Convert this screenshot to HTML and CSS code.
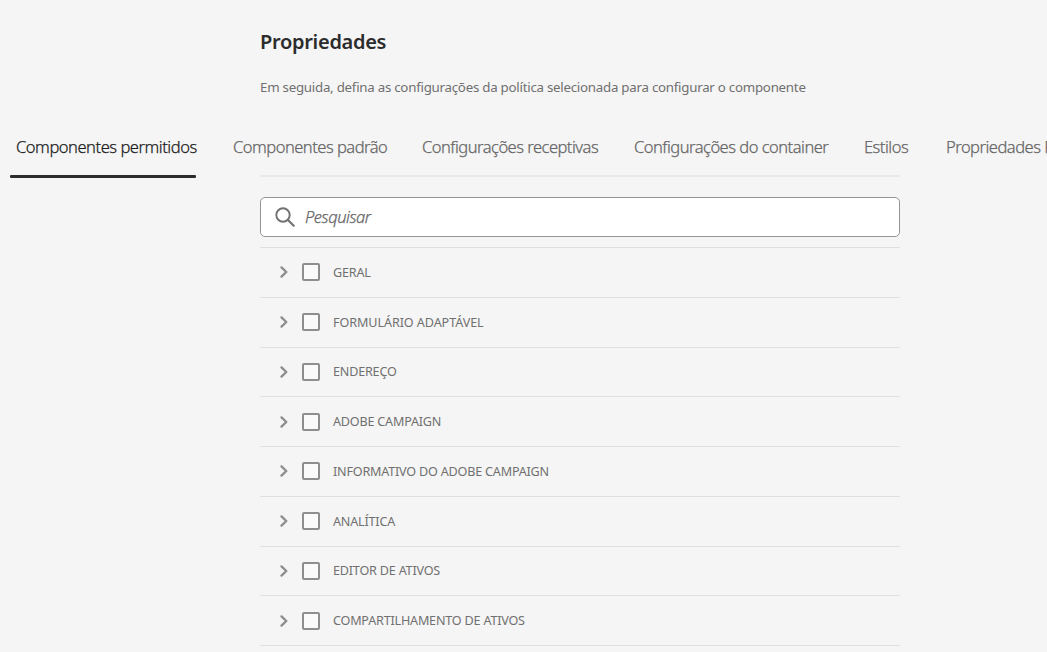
FILE: index.html
```
<!DOCTYPE html>
<html lang="pt-BR">
<head>
<meta charset="utf-8">
<title>Propriedades</title>
<link rel="stylesheet" href="styles.css">
</head>
<body>
<svg class="defs" aria-hidden="true"><symbol id="chevron" viewBox="0 0 10 14"><path d="M2.5 2.4 7.3 7 2.5 11.6" fill="none" stroke="currentColor" stroke-width="2.4" stroke-linecap="round" stroke-linejoin="round"/></symbol></svg>
<header class="intro">
  <h1 class="title">Propriedades</h1>
  <p class="lead">Em seguida, defina as configurações da política selecionada para configurar o componente</p>
</header>
<nav class="tabs">
  <a class="tab tab-active">Componentes permitidos</a>
  <a class="tab">Componentes padrão</a>
  <a class="tab">Configurações receptivas</a>
  <a class="tab">Configurações do container</a>
  <a class="tab">Estilos</a>
  <a class="tab">Propriedades P</a>
</nav>
<div class="rules"><span class="indicator"></span><span class="divider"></span></div>
<main class="panel">
  <label class="search">
    <svg class="search-icon" viewBox="0 0 20 20"><circle cx="8" cy="8" r="6.7" fill="none" stroke="currentColor" stroke-width="1.9"/><path d="M13 13 18.7 18.7" stroke="currentColor" stroke-width="2.1" stroke-linecap="round"/></svg>
    <span class="placeholder">Pesquisar</span>
  </label>
  <ul class="groups">
    <li class="group"><svg class="chevron"><use href="#chevron"/></svg><span class="checkbox"></span><span class="name">GERAL</span></li>
    <li class="group"><svg class="chevron"><use href="#chevron"/></svg><span class="checkbox"></span><span class="name name-loose">FORMULÁRIO ADAPTÁVEL</span></li>
    <li class="group"><svg class="chevron"><use href="#chevron"/></svg><span class="checkbox"></span><span class="name">ENDEREÇO</span></li>
    <li class="group"><svg class="chevron"><use href="#chevron"/></svg><span class="checkbox"></span><span class="name">ADOBE CAMPAIGN</span></li>
    <li class="group"><svg class="chevron"><use href="#chevron"/></svg><span class="checkbox"></span><span class="name">INFORMATIVO DO ADOBE CAMPAIGN</span></li>
    <li class="group"><svg class="chevron"><use href="#chevron"/></svg><span class="checkbox"></span><span class="name">ANALÍTICA</span></li>
    <li class="group"><svg class="chevron"><use href="#chevron"/></svg><span class="checkbox"></span><span class="name">EDITOR DE ATIVOS</span></li>
    <li class="group"><svg class="chevron"><use href="#chevron"/></svg><span class="checkbox"></span><span class="name">COMPARTILHAMENTO DE ATIVOS</span></li>
  </ul>
</main>
</body>
</html>
```
FILE: styles.css
```
* { box-sizing: border-box; }
body {
  margin: 0;
  height: 652px;
  overflow: hidden;
  background: #f5f5f5;
  color: #707070;
  font-family: "Noto Sans", "Open Sans", sans-serif;
}
.defs { display: none; }
.intro { padding: 27px 0 0 260px; }
.title {
  margin: 0;
  font-size: 20px;
  font-weight: 600;
  line-height: 30px;
  letter-spacing: -0.3px;
  color: #2c2c2c;
}
.lead {
  margin: 20px 0 0;
  font-size: 13.3px;
  line-height: 20px;
  letter-spacing: -0.25px;
  white-space: nowrap;
}
.tabs {
  display: grid;
  grid-template-columns: 181px 153px 176px 194px 46px 140px;
  column-gap: 36px;
  padding: 38px 0 0 16px;
}
.tab {
  font-size: 16.5px;
  font-weight: 300;
  line-height: 24px;
  letter-spacing: -0.5px;
  white-space: nowrap;
  color: #666;
  -webkit-text-stroke: 0.25px currentColor;
}
.tab-active { color: #1c1c1c; letter-spacing: -0.46px; }
.rules {
  display: flex;
  gap: 64px;
  height: 22px;
  padding: 16px 0 0 10px;
}
.indicator { width: 186px; height: 3px; border-radius: 1px; background: #2c2c2c; }
.divider { width: 640px; height: 2px; background: #e9e9e9; }
.panel { width: 640px; margin: 16px 0 0 260px; }
.search {
  display: flex;
  align-items: center;
  gap: 10px;
  height: 40px;
  padding: 0 14px;
  border: 1px solid #959595;
  border-radius: 5px;
  background: #fff;
}
.search-icon { width: 20px; height: 20px; }
.placeholder {
  padding-bottom: 2px;
  font-size: 16.5px;
  font-style: italic;
  font-weight: 300;
  letter-spacing: -0.45px;
  color: #666;
  -webkit-text-stroke: 0.25px currentColor;
}
.groups {
  margin: 10px 0 0;
  padding: 0;
  list-style: none;
  border-top: 1px solid #e0e0e0;
}
.group {
  display: flex;
  align-items: center;
  height: 49.75px;
  padding-left: 19px;
  border-bottom: 1px solid #e0e0e0;
}
.chevron { width: 10px; height: 14px; color: #8e8e8e; }
.checkbox {
  width: 18px;
  height: 18px;
  margin: 0 13px;
  border: 2px solid #8e8e8e;
  border-radius: 2px;
  background: #fafafa;
}
.name { font-size: 12.6px; letter-spacing: -0.2px; }
.name-loose { letter-spacing: -0.08px; }
```
